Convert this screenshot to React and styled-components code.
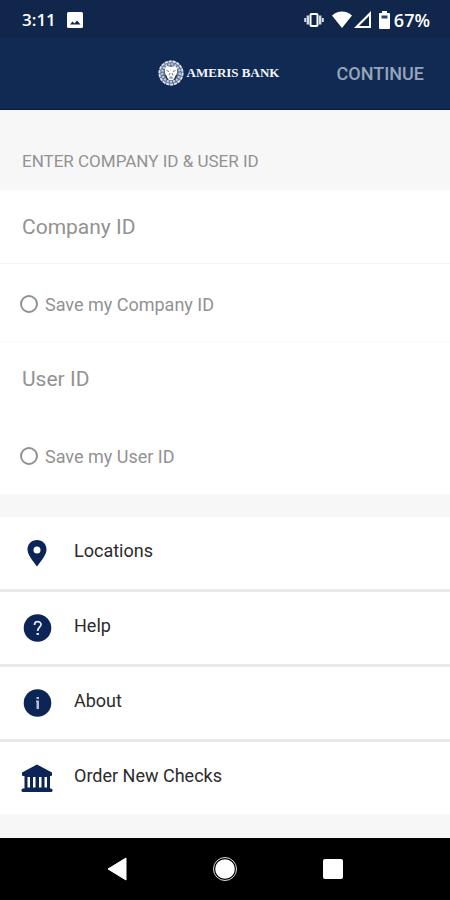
import styled, { createGlobalStyle } from "styled-components";
import { useState } from "react";

const GlobalStyle = createGlobalStyle`
  * {
    box-sizing: border-box;
  }
  body {
    margin: 0;
    background: #f7f7f7;
    font-family: Roboto, "Liberation Sans", sans-serif;
  }
`;

const Screen = styled.div`
  display: flex;
  flex-direction: column;
  min-height: 100vh;
`;
const StatusBar = styled.div`
  display: flex;
  align-items: center;
  justify-content: space-between;
  height: 37px;
  padding: 2px 20px 0 22px;
  background: #10264b;
  color: #fff;
  font-family: "Open Sans", Roboto, sans-serif;
  font-size: 18px;
  font-weight: 600;
`;
const StatusGroup = styled.div`
  display: flex;
  align-items: center;
  gap: ${(props) => props.$gap};
`;
const Clock = styled.span`
  font-size: 17px;
`;
const Header = styled.header`
  display: grid;
  grid-template-columns: 1fr auto 1fr;
  align-items: center;
  height: 73px;
  padding: 0 26px 0 13px;
  border-bottom: 1px solid #0a1c45;
  background: #112a54;
`;
const Brand = styled.div`
  display: flex;
  grid-column: 2;
  align-items: center;
  gap: 3px;
  color: #f2f5fa;
  font-family: "Liberation Serif", serif;
  font-size: 13px;
  font-weight: bold;
  white-space: nowrap;
`;
const ContinueButton = styled.button`
  justify-self: end;
  padding: 0;
  border: 0;
  background: none;
  color: #97a4b9;
  font: 500 18px Roboto, sans-serif;
  cursor: pointer;
`;
const Title = styled.h1`
  margin: 0;
  padding: 40px 22px 17px;
  color: #929292;
  font-size: 17px;
  font-weight: normal;
  line-height: 23px;
`;
const Form = styled.form`
  background: #fff;
`;
const Field = styled.input`
  display: block;
  width: 100%;
  height: 74px;
  padding: 0 22px;
  border: 0;
  border-bottom: 1px solid ${(props) => props.$line};
  background: #fff;
  color: #444;
  font: 21px Roboto, sans-serif;
  &::placeholder {
    color: #929292;
    opacity: 1;
  }
`;
const SaveRow = styled.label`
  display: flex;
  align-items: center;
  gap: 7px;
  height: 78px;
  padding: 3px 20px 0;
  border-bottom: 1px solid ${(props) => props.$line};
  color: #929292;
  font-size: 18px;
`;
const Checkbox = styled.input.attrs({ type: "checkbox" })`
  appearance: none;
  width: 18px;
  height: 18px;
  margin: 0;
  border: 2px solid #929292;
  border-radius: 50%;
  &:checked {
    background: #929292;
  }
`;
const Menu = styled.nav`
  display: flex;
  flex-direction: column;
  gap: 3px;
  margin: 23px 0 24px;
  background: #e9e9e9;
`;
const MenuLink = styled.a`
  display: flex;
  align-items: center;
  gap: 20px;
  height: 72px;
  padding: 0 20px;
  background: #fff;
  color: #2b2b2b;
  font-size: 18px;
  text-decoration: none;
`;
const MenuLabel = styled.span`
  padding-bottom: 5px;
`;
const SystemNav = styled.div`
  display: grid;
  grid-template-columns: repeat(3, 108px);
  justify-content: center;
  height: 62px;
  margin-top: auto;
  background: #000;
`;
const SystemButton = styled.button`
  display: flex;
  align-items: center;
  justify-content: center;
  padding: 0;
  border: 0;
  background: none;
`;

const PictureIcon = () => (
  <svg width="16" height="16" viewBox="0 0 16 16">
    <rect width="16" height="16" rx="1.500" fill="#fff" />
    <path d="M3 12.500 5.500 9.500 7.500 11.500 10 8.500 13.500 12.500Z" fill="#10264b" />
  </svg>
);

const VibrateIcon = () => (
  <svg width="20" height="14" viewBox="0 0 20 14" fill="none">
    <rect x="6.500" y="1" width="7" height="12" rx="1" stroke="#fff" strokeWidth="2" />
    <path d="M3.800 2.500V11.500M16.200 2.500V11.500" stroke="#d3d9e3" strokeWidth="2.400" />
    <path d="M1.200 5V9M18.800 5V9" stroke="#d3d9e3" strokeWidth="2" />
  </svg>
);

const WifiIcon = () => (
  <svg width="20" height="17" viewBox="0 0 20 17">
    <path d="M0 4.500Q4.500 0.500 10 0.500T20 4.500L10 17Z" fill="#fff" />
  </svg>
);

const SignalIcon = () => (
  <svg width="17" height="17" viewBox="0 0 17 17">
    <path
      fillRule="evenodd"
      d="M17 0V17H0ZM15 5 8 12V15H15Z"
      fill="#fff"
    />
    <path d="M5 15 8 12V15Z" fill="#10264b" />
  </svg>
);

const BatteryIcon = () => (
  <svg width="11" height="18" viewBox="0 0 11 18">
    <path d="M3 0H8V2H10Q11 2 11 3V17Q11 18 10 18H1Q0 18 0 17V3Q0 2 1 2H3Z" fill="#fff" />
    <path d="M2.500 4.500H8.500V7.500H2.500Z" fill="#2f4468" />
  </svg>
);

const LionLogo = () => (
  <svg width="26" height="26" viewBox="0 0 26 26" fill="none">
    <circle cx="13" cy="13" r="12.400" fill="#5f7192" />
    <circle cx="13" cy="13" r="11.600" stroke="#dfe5ee" strokeWidth="1.800" strokeDasharray="3 1" />
    <circle cx="13" cy="13" r="8.800" stroke="#c3ccdc" strokeWidth="2.200" strokeDasharray="2 1.200" />
    <path
      d="M7 8 9 6 13 7 17 6 19 8 19 13 17 17 15 20 11 20 9 17 7 13Z"
      fill="#fff"
    />
    <path
      d="M8.500 10.500 11 11.500M17.500 10.500 15 11.500M12 13 11 15.500M14 13 15 15.500M11 18H15M13 16V18"
      stroke="#6b7b9a"
    />
    <path d="M7.500 15 9.500 20M18.500 15 16.500 20" stroke="#112a54" />
  </svg>
);

const PinIcon = () => (
  <svg width="34" height="28" viewBox="0 0 34 28">
    <path
      fillRule="evenodd"
      d="M17 1C11.500 1 7.500 5 7.500 10.500C7.500 16 13 22 17 27.500C21 22 26.500 16 26.500 10.500C26.500 5 22.500 1 17 1ZM17 7.500A3.500 3.500 0 1 1 17 14.500A3.500 3.500 0 0 1 17 7.500Z"
      fill="#0c2556"
    />
  </svg>
);

const HelpIcon = () => (
  <svg width="34" height="28" viewBox="0 0 34 28" fill="none">
    <circle cx="17.500" cy="14" r="13.800" fill="#0c2556" />
    <path
      d="M14.500 11C14.500 6.500 21 6.800 21 10.500C21 13 17.700 13.500 17.700 17"
      stroke="#dfe5f0"
      strokeWidth="1.800"
    />
    <path d="M16.500 19H19V21H16.500Z" fill="#dfe5f0" />
  </svg>
);

const InfoIcon = () => (
  <svg width="34" height="28" viewBox="0 0 34 28">
    <circle cx="17.500" cy="14" r="13.800" fill="#0c2556" />
    <path d="M16.500 8H19V10H16.500ZM16 11.500H19V20H16.500V13H16Z" fill="#b4bfd6" />
  </svg>
);

const BankIcon = () => (
  <svg width="34" height="28" viewBox="0 0 34 28" fill="#0c2556">
    <path d="M17 0.500 32 8.500V11Q32 12 31 12H3Q2 12 2 11V8.500Z" />
    <path d="M4.500 11H30V25H4.500Z" />
    <path d="M7.500 13H10V23.500H7.500ZM13 13H15.500V23.500H13ZM19 13H21.500V23.500H19ZM24.500 13H27V23.500H24.500Z" fill="#fff" />
    <rect x="1.500" y="24.500" width="31" height="3.500" rx="1.500" />
  </svg>
);

const menuItems = [
  { label: "Locations", Icon: PinIcon },
  { label: "Help", Icon: HelpIcon },
  { label: "About", Icon: InfoIcon },
  { label: "Order New Checks", Icon: BankIcon },
];

function App() {
  const [saved, setSaved] = useState({ company: false, user: false });

  const toggleSaved = (key) => {
    setSaved((previous) => ({ ...previous, [key]: !previous[key] }));
  };

  return (
    <Screen>
      <GlobalStyle />
      <StatusBar>
        <StatusGroup $gap="11px">
          <Clock>3:11</Clock>
          <PictureIcon />
        </StatusGroup>
        <StatusGroup $gap="4px">
          <StatusGroup $gap="8px">
            <VibrateIcon />
            <StatusGroup $gap="2px">
              <WifiIcon />
              <SignalIcon />
            </StatusGroup>
            <BatteryIcon />
          </StatusGroup>
          <span>67%</span>
        </StatusGroup>
      </StatusBar>
      <Header>
        <Brand>
          <LionLogo />
          <span>AMERIS BANK</span>
        </Brand>
        <ContinueButton type="submit" form="login">
          CONTINUE
        </ContinueButton>
      </Header>
      <Title>ENTER COMPANY ID &amp; USER ID</Title>
      <Form id="login" onSubmit={(event) => event.preventDefault()}>
        <Field
          type="text"
          placeholder="Company ID"
          aria-label="Company ID"
          $line="#f3f3f3"
        />
        <SaveRow $line="#fafafa">
          <Checkbox
            checked={saved.company}
            onChange={() => toggleSaved("company")}
          />
          Save my Company ID
        </SaveRow>
        <Field
          type="text"
          placeholder="User ID"
          aria-label="User ID"
          $line="#fff"
        />
        <SaveRow $line="#fff">
          <Checkbox checked={saved.user} onChange={() => toggleSaved("user")} />
          Save my User ID
        </SaveRow>
      </Form>
      <Menu>
        {menuItems.map(({ label, Icon }) => (
          <MenuLink key={label} href="#">
            <Icon />
            <MenuLabel>{label}</MenuLabel>
          </MenuLink>
        ))}
      </Menu>
      <SystemNav>
        <SystemButton aria-label="Back">
          <svg width="20" height="24" viewBox="0 0 20 24">
            <path d="M19 1V23L1 12Z" fill="#fff" stroke="#fff" strokeLinejoin="round" />
          </svg>
        </SystemButton>
        <SystemButton aria-label="Home">
          <svg width="26" height="26" viewBox="0 0 26 26">
            <circle cx="13" cy="13" r="11.500" fill="none" stroke="#ddd" />
            <circle cx="13" cy="13" r="9.800" fill="#fff" />
          </svg>
        </SystemButton>
        <SystemButton aria-label="Recent apps">
          <svg width="22" height="22" viewBox="0 0 22 22">
            <rect x="1" y="1" width="20" height="20" rx="2" fill="#fff" />
          </svg>
        </SystemButton>
      </SystemNav>
    </Screen>
  );
}

export default App;
